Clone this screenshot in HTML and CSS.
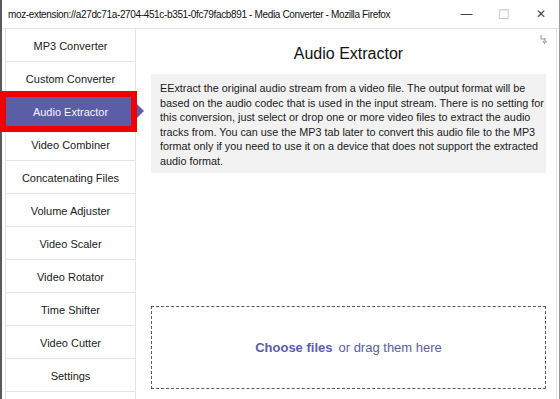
FILE: index.html
```html
<!DOCTYPE html>
<html lang="en">
<head>
  <meta charset="UTF-8" />
  <title>Media Converter</title>
  <link rel="stylesheet" href="styles.css">
</head>
<body>
  <div class="window">
    <div class="titlebar">
      <span class="title-text">moz-extension://a27dc71a-2704-451c-b351-0fc79facb891 - Media Converter - Mozilla Firefox</span>
      <div class="win-controls">
        <span class="win-btn">&#8212;</span>
        <span class="win-btn max">&#9744;</span>
        <span class="win-btn">&#10005;</span>
      </div>
    </div>

    <div class="app">
      <nav class="sidebar">
        <a class="nav-item">MP3 Converter</a>
        <a class="nav-item">Custom Converter</a>
        <a class="nav-item active">Audio Extractor</a>
        <a class="nav-item">Video Combiner</a>
        <a class="nav-item">Concatenating Files</a>
        <a class="nav-item">Volume Adjuster</a>
        <a class="nav-item">Video Scaler</a>
        <a class="nav-item">Video Rotator</a>
        <a class="nav-item">Time Shifter</a>
        <a class="nav-item">Video Cutter</a>
        <a class="nav-item">Settings</a>
      </nav>

      <main class="content">
        <!-- popout icon top right -->
        <svg class="popout" width="8" height="11" viewBox="0 0 8 11">
          <path d="M1 1v4h4M5 4v4h2M3 7l2 3" fill="none" stroke="#9a9a9a" stroke-width="1.1"/>
        </svg>
        <h1 class="page-title">Audio Extractor</h1>
        <p class="description">EExtract the original audio stream from a video file. The output format will be based on the audio codec that is used in the input stream. There is no setting for this conversion, just select or drop one or more video files to extract the audio tracks from. You can use the MP3 tab later to convert this audio file to the MP3 format only if you need to use it on a device that does not support the extracted audio format.</p>

        <div class="dropzone">
          <span class="choose">Choose files</span>
          <span class="drag">or drag them here</span>
        </div>
      </main>
      <div class="scroll-edge"></div>
    </div>
  </div>
</body>
</html>
```

FILE: styles.css
```css
* {
  margin: 0;
  padding: 0;
  box-sizing: border-box;
}

html, body {
  height: 100%;
}

body {
  font-family: "Liberation Sans", Arial, sans-serif;
  background-color: #ffffff;
  color: #222;
  overflow: hidden;
}

.window {
  height: 399px;
  display: flex;
  flex-direction: column;
  border-left: 2px solid #5a5a5a;
  border-right: 1px solid #9a9a9a;
}

.titlebar {
  height: 29px;
  display: flex;
  align-items: center;
  justify-content: space-between;
  padding-left: 6px;
  border-bottom: 1px solid #e2e2e2;
  font-family: "Liberation Sans", Arial, sans-serif;
  font-size: 10px;
  letter-spacing: -0.35px;
  color: #111;
  white-space: nowrap;
}

.win-controls {
  display: flex;
  height: 100%;
  letter-spacing: 0;
}

.win-btn {
  width: 37px;
  display: flex;
  align-items: center;
  justify-content: center;
  font-size: 12px;
  color: #444;
}

.win-btn.max {
  color: #bbb;
  font-size: 13px;
}

.app {
  flex: 1;
  display: flex;
  min-height: 0;
}

.sidebar {
  width: 131px;
  margin-left: 3px;
  border-left: 1px solid #e4e4e4;
  border-right: 1px solid #e4e4e4;
  display: flex;
  flex-direction: column;
}

.nav-item {
  position: relative;
  height: 33px;
  flex-shrink: 0;
  display: flex;
  align-items: center;
  justify-content: center;
  border-bottom: 1px solid #e4e4e4;
  font-size: 11px;
  color: #1a1a1a;
  padding-top: 1px;
}

.nav-item.active {
  background-color: #5b5ea6;
  color: #f4f4ff;
}

/* red annotation frame */
.nav-item.active::before {
  content: "";
  position: absolute;
  left: -6px;
  top: -4px;
  right: -2px;
  bottom: -5px;
  border: 6px solid #f00000;
}

/* pointer arrow */
.nav-item.active::after {
  content: "";
  position: absolute;
  right: -9px;
  top: 9px;
  border-top: 7px solid transparent;
  border-bottom: 7px solid transparent;
  border-left: 7px solid #5b5ea6;
}

.content {
  position: relative;
  flex: 1;
  display: flex;
  flex-direction: column;
  padding: 0 10px 10px 15px;
}

.popout {
  position: absolute;
  right: 8px;
  top: 5px;
}

.page-title {
  text-align: center;
  font-size: 16px;
  font-weight: normal;
  color: #111;
  margin: 16px 0 11px;
}

.description {
  background-color: #f2f2f2;
  padding: 7px 2px 4px 9px;
  font-size: 10.8px;
  line-height: 14.6px;
  color: #1a1a1a;
}

.dropzone {
  margin-top: auto;
  height: 83px;
  border: 1px dashed #555a70;
  display: flex;
  align-items: center;
  justify-content: center;
  gap: 6px;
  font-size: 13px;
  color: #5b5ea6;
}

.choose {
  font-weight: bold;
}

.scroll-edge {
  width: 3px;
  border-left: 1px solid #e2e2e2;
}
```
